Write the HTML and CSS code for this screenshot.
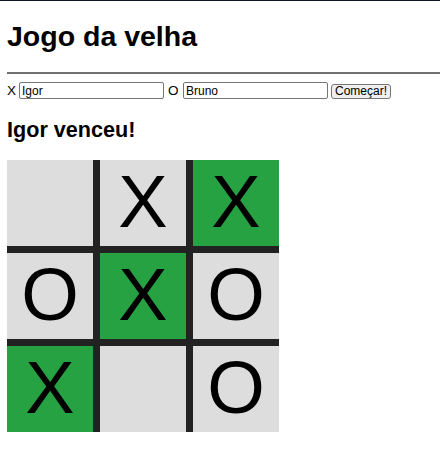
FILE: index.html
```html
<!DOCTYPE html>
<html lang="pt">
<head>
<meta charset="utf-8">
<title>Jogo da velha</title>
<link rel="stylesheet" href="styles.css">
</head>
<body>
<div class="page">
  <h1 class="title">Jogo da velha</h1>
  <hr class="rule">
  <div class="players">
    <span class="label">X</span>
    <input class="name name-x" type="text" value="Igor">
    <span class="label label-o">O</span>
    <input class="name name-o" type="text" value="Bruno">
    <button class="start" type="button">Começar!</button>
  </div>
  <h2 class="status">Igor venceu!</h2>
  <div class="board">
    <div class="cell"></div>
    <div class="cell">X</div>
    <div class="cell win">X</div>
    <div class="cell">O</div>
    <div class="cell win">X</div>
    <div class="cell">O</div>
    <div class="cell win">X</div>
    <div class="cell"></div>
    <div class="cell">O</div>
  </div>
</div>
</body>
</html>
```
FILE: styles.css
```css
html {
  border-top: 1px solid #0f172a;
  background: #fff;
}
body {
  margin: 0;
  font-family: "Liberation Sans", Arial, sans-serif;
  color: #000;
  overflow: hidden;
}
.page {
  padding-left: 7px;
}
.title {
  margin: 19px 0 19px;
  font-size: 28.5px;
  line-height: 33px;
  font-weight: bold;
}
.rule {
  margin: 0 -10px 8px 0;
  height: 2px;
  border: none;
  background: #707070;
}
.players {
  display: flex;
  align-items: center;
  height: 17px;
  font-size: 13.5px;
}
.label {
  width: 9px;
  margin-right: 3px;
  line-height: 17px;
}
.label-o {
  width: 11px;
  margin-left: 4px;
  margin-right: 4px;
}
.name {
  box-sizing: border-box;
  width: 145px;
  height: 17px;
  margin: 0;
  padding: 0 2px;
  border: 1px solid #767676;
  border-radius: 2px;
  font-family: "Liberation Sans", Arial, sans-serif;
  font-size: 12px;
  color: #000;
  background: #fff;
}
.start {
  box-sizing: border-box;
  height: 15px;
  margin: 1px 0 0 3px;
  padding: 0 3px;
  border: 1px solid #767676;
  border-radius: 3px;
  background: #efefef;
  font-family: "Liberation Sans", Arial, sans-serif;
  font-size: 12px;
  line-height: 13px;
  color: #000;
}
.status {
  margin: 18px 0;
  font-size: 21.6px;
  line-height: 25px;
  font-weight: bold;
}
.board {
  display: grid;
  grid-template-columns: repeat(3, 86px);
  grid-auto-rows: 86px;
  gap: 7px;
  width: 272px;
  background: #222;
}
.cell {
  display: flex;
  align-items: center;
  justify-content: center;
  background: #ddd;
  font-size: 74px;
  line-height: 1;
  padding-bottom: 3px;
  box-sizing: border-box;
}
.cell.win {
  background: #26a243;
}
```
